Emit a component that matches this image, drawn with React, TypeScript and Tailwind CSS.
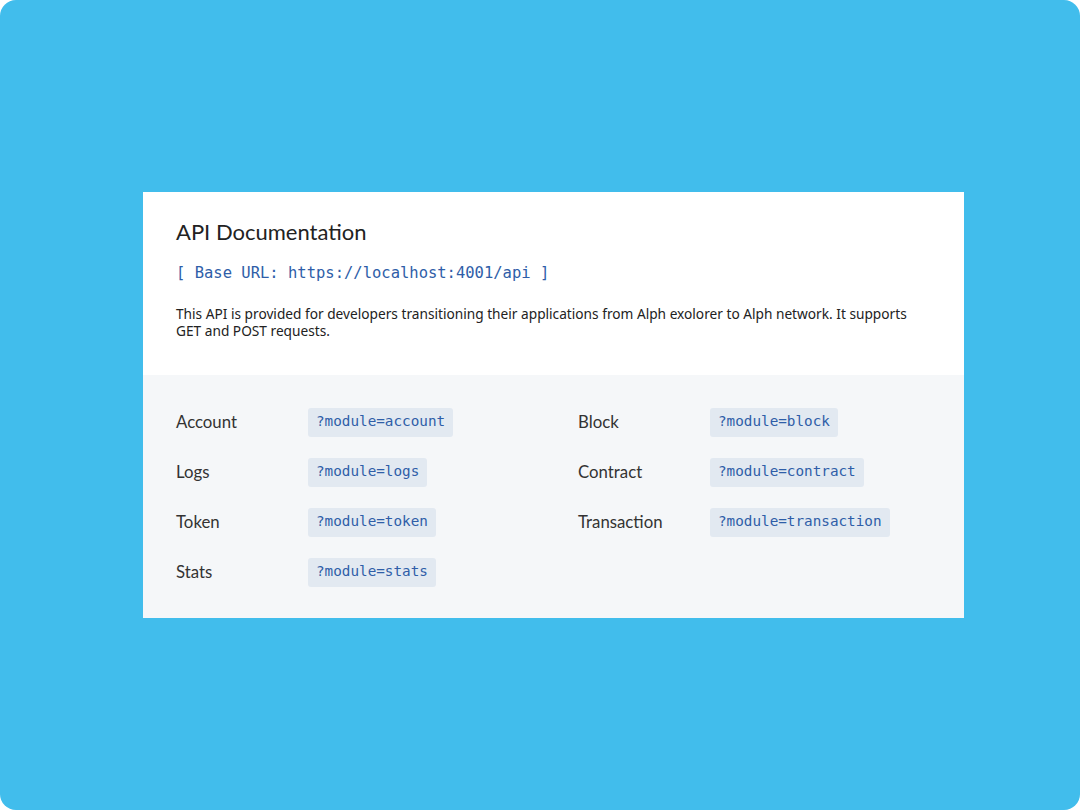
import React from 'react';

const modules = [
  { label: 'Account', query: '?module=account' },
  { label: 'Block', query: '?module=block' },
  { label: 'Logs', query: '?module=logs' },
  { label: 'Contract', query: '?module=contract' },
  { label: 'Token', query: '?module=token' },
  { label: 'Transaction', query: '?module=transaction' },
  { label: 'Stats', query: '?module=stats' },
];

const mono = "font-['DejaVu_Sans_Mono',monospace]";

export default function App() {
  return (
    <div className="w-[1080px] h-[810px] bg-white">
      <div className="w-full h-full rounded-2xl bg-[#41bdec] flex items-center justify-center font-['Lato',sans-serif]">
        <div className="w-[821px] ml-[27px] -mt-[1px] flex flex-col">
          {/* Header */}
          <section className="bg-white px-[33px] pt-[26px] pb-[36px]">
            <h1 className="text-[22px] leading-[28px] text-[#222]">API Documentation</h1>
            <p className={`${mono} mt-[17px] text-[15.5px] leading-[20px] text-[#2f5ea8]`}>
              [ Base URL: https://localhost:4001/api ]
            </p>
            <p className="mt-[22px] font-['Noto_Sans',sans-serif] text-[13.7px] leading-[17px] text-[#222]">
              This API is provided for developers transitioning their applications from Alph exolorer to Alph network. It supports
              <br />
              GET and POST requests.
            </p>
          </section>

          {/* Modules */}
          <section className="bg-[#f5f7f9] px-[33px] pt-[33px] pb-[31px]">
            <div className="grid grid-cols-[402px_1fr] gap-y-[21px]">
              {modules.map((m) => (
                <div key={m.label} className="flex items-center">
                  <span className="w-[132px] text-[16.8px] text-[#333]">{m.label}</span>
                  <code
                    className={`${mono} h-[29px] px-[8px] flex items-center rounded-[3px] bg-[#e2e9f1] text-[14.3px] text-[#2f5ea8]`}
                  >
                    {m.query}
                  </code>
                </div>
              ))}
            </div>
          </section>
        </div>
      </div>
    </div>
  );
}
